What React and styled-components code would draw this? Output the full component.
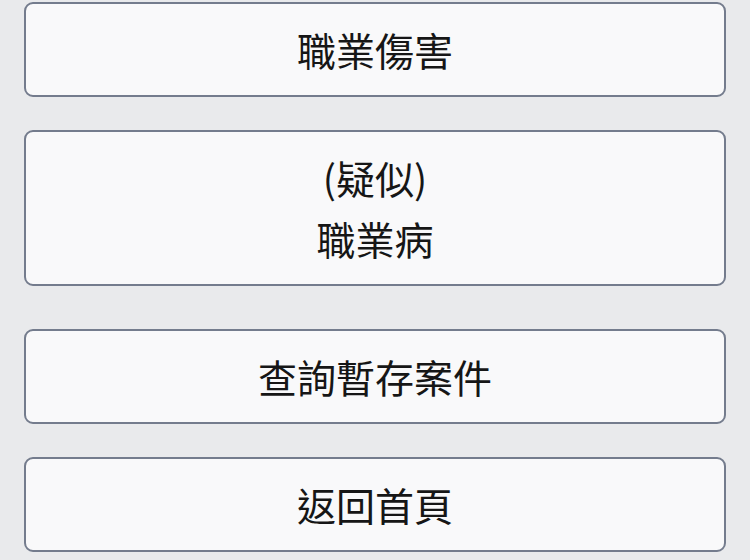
import React from "react";
import styled, { createGlobalStyle } from "styled-components";

const Global = createGlobalStyle`
  html, body { margin: 0; padding: 0; background: #e9eaec; }
  body { font-family: "Noto Sans CJK TC", "Noto Sans", sans-serif; }
`;

const Page = styled.div`
  width: 750px;
  height: 560px;
  box-sizing: border-box;
  padding: 2px 24px 0 24px;
  display: flex;
  flex-direction: column;
  overflow: hidden;
`;

const Button = styled.button`
  box-sizing: border-box;
  width: 100%;
  flex-shrink: 0;
  margin: ${(p) => p.$top || 0}px 0 0 0;
  padding: 15px 0;
  border: 2px solid #747c8d;
  border-radius: 9px;
  background: #f9f9fa;
  color: #161616;
  font-family: "Noto Sans CJK TC", "Noto Sans", sans-serif;
  font-size: 39px;
  line-height: 61px;
  text-align: center;
  cursor: pointer;
  display: flex;
  flex-direction: column;
  align-items: center;
  justify-content: center;
`;

const Line = styled.span`
  display: block;
`;

export default function App() {
  return (
    <>
      <Global />
      <Page>
        <Button>
          <Line>職業傷害</Line>
        </Button>
        <Button $top={33}>
          <Line>(疑似)</Line>
          <Line>職業病</Line>
        </Button>
        <Button $top={43}>
          <Line>查詢暫存案件</Line>
        </Button>
        <Button $top={33}>
          <Line>返回首頁</Line>
        </Button>
      </Page>
    </>
  );
}
